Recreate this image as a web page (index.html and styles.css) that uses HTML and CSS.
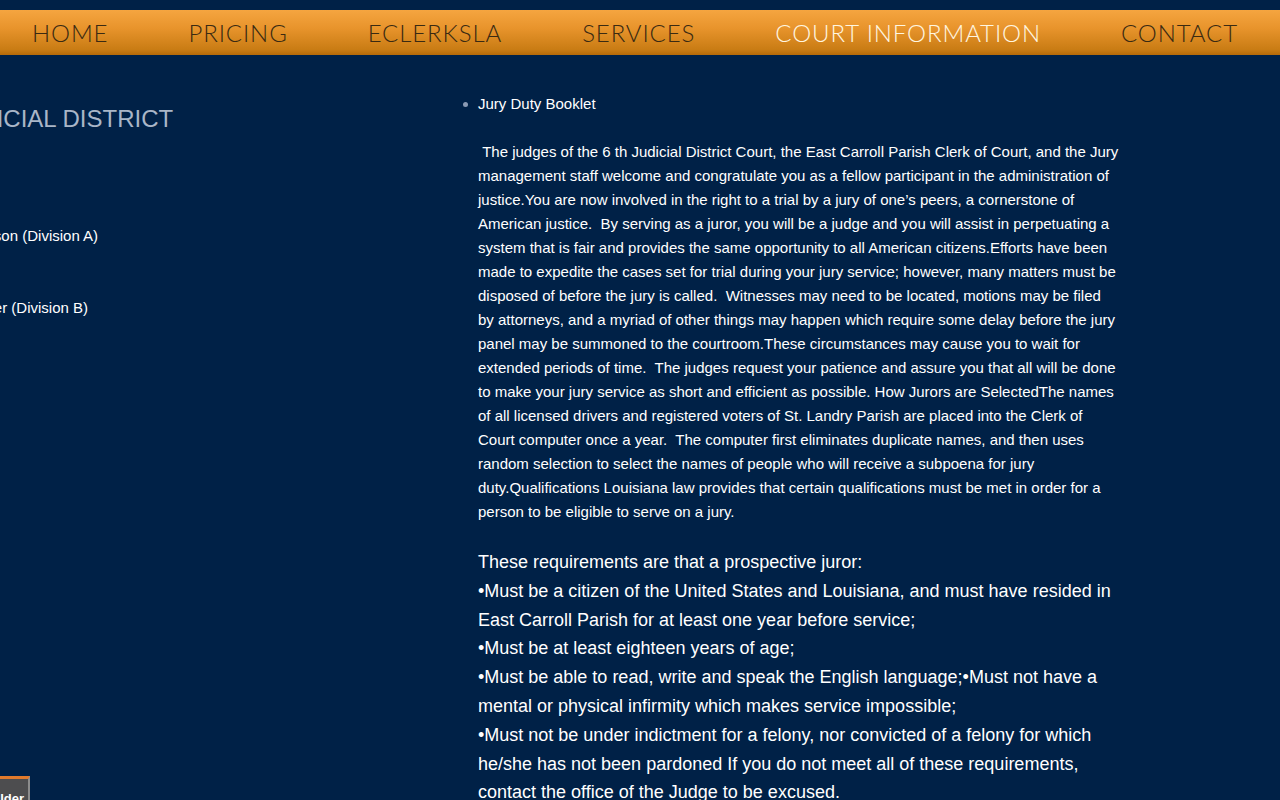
FILE: index.html
```html
<!DOCTYPE html>
<html lang="en">
<head>
<meta charset="utf-8">
<title>Court Information</title>
<link rel="stylesheet" href="styles.css">
</head>
<body>
<div class="topgap"></div>
<nav class="nav">
  <a class="nav-item" href="#">HOME</a>
  <a class="nav-item" href="#">PRICING</a>
  <a class="nav-item" href="#">ECLERKSLA</a>
  <a class="nav-item" href="#">SERVICES</a>
  <a class="nav-item active" href="#">COURT INFORMATION</a>
  <a class="nav-item" href="#">CONTACT</a>
</nav>
<main class="page">
  <aside class="side">
    <h2 class="side-title">6TH JUDICIAL DISTRICT</h2>
    <p class="judge judge-a">Judge M. Dawson (Division A)</p>
    <p class="judge judge-b">Judge M. Brister (Division B)</p>
  </aside>
  <section class="content">
    <ul class="links">
      <li>Jury Duty Booklet</li>
    </ul>
    <p class="intro">&nbsp;The judges of the 6 th Judicial District Court, the East Carroll Parish Clerk of Court, and the Jury management staff welcome and congratulate you as a fellow participant in the administration of justice.You are now involved in the right to a trial by a jury of one’s peers, a cornerstone of American justice.&nbsp; By serving as a juror, you will be a judge and you will assist in perpetuating a system that is fair and provides the same opportunity to all American citizens.Efforts have been made to expedite the cases set for trial during your jury service; however, many matters must be disposed of before the jury is called.&nbsp; Witnesses may need to be located, motions may be filed by attorneys, and a myriad of other things may happen which require some delay before the jury panel may be summoned to the courtroom.These circumstances may cause you to wait for extended periods of time.&nbsp; The judges request your patience and assure you that all will be done to make your jury service as short and efficient as possible. How Jurors are SelectedThe names of all licensed drivers and registered voters of St. Landry Parish are placed into the Clerk of Court computer once a year.&nbsp; The computer first eliminates duplicate names, and then uses random selection to select the names of people who will receive a subpoena for jury duty.Qualifications Louisiana law provides that certain qualifications must be met in order for a person to be eligible to serve on a jury.</p>
    <p class="reqs">These requirements are that a prospective juror:<br>•Must be a citizen of the United States and Louisiana, and must have resided in East Carroll Parish for at least one year before service;<br>•Must be at least eighteen years of age;<br>•Must be able to read, write and speak the English language;•Must not have a mental or physical infirmity which makes service impossible;<br>•Must not be under indictment for a felony, nor convicted of a felony for which he/she has not been pardoned If you do not meet all of these requirements, contact the office of the Judge to be excused.</p>
  </section>
</main>
<a class="builder" href="#">Site Builder</a>
</body>
</html>
```

FILE: styles.css
```css
html, body {
  margin: 0;
  padding: 0;
}
body {
  background: #002147;
  color: #ffffff;
  font-family: "Liberation Sans", Arial, sans-serif;
  overflow: hidden;
  width: 1280px;
  height: 800px;
}
.topgap {
  height: 10px;
}
.nav {
  display: flex;
  height: 45px;
  align-items: center;
  padding-left: 32px;
  gap: 80px;
  background: linear-gradient(to bottom, #f5a540 0%, #e8942c 40%, #c97c14 88%, #b56a08 100%);
  box-sizing: border-box;
}
.nav-item {
  font-family: Lato, "Open Sans", sans-serif;
  font-weight: 300;
  font-size: 24px;
  letter-spacing: 0.9px;
  color: #3a2a12;
  text-decoration: none;
  line-height: 46px;
  padding-top: 1px;
  white-space: nowrap;
}
.nav-item.active {
  color: #fff6e0;
}
.page {
  display: flex;
  align-items: flex-start;
}
.side {
  width: 464px;
  margin-left: -102px;
  flex-shrink: 0;
  padding-top: 50px;
}
.side-title {
  margin: 0;
  font-size: 24px;
  font-weight: normal;
  color: #a9b6c8;
  line-height: 28px;
}
.judge {
  margin: 0;
  font-size: 15px;
  line-height: 24px;
  color: #ffffff;
}
.judge-a {
  margin-top: 91px;
}
.judge-b {
  margin-top: 48px;
}
.content {
  width: 641px;
  padding-top: 37px;
  margin-left: 116px;
  flex-shrink: 0;
}
.links {
  margin: 0 0 24px 0;
  padding-left: 0;
  list-style: none;
  font-size: 15px;
  line-height: 24px;
}
.links li {
  position: relative;
}
.links li::before {
  content: "";
  position: absolute;
  left: -15px;
  top: 10px;
  width: 5px;
  height: 5px;
  border-radius: 50%;
  background: #8a9ab4;
}
.intro {
  margin: 0;
  font-size: 15px;
  line-height: 24px;
}
.reqs {
  margin: 24px 0 0 0;
  font-size: 18px;
  line-height: 28.8px;
}
.builder {
  position: fixed;
  left: -60px;
  top: 776px;
  width: 90px;
  height: 40px;
  box-sizing: border-box;
  background: #4d4d4f;
  border-top: 3px solid #e07a2c;
  border-right: 2px solid #8c8c8c;
  color: #ffffff;
  font-weight: bold;
  font-size: 13px;
  text-decoration: none;
  padding: 12px 4px 0 0;
  text-align: right;
}
```
